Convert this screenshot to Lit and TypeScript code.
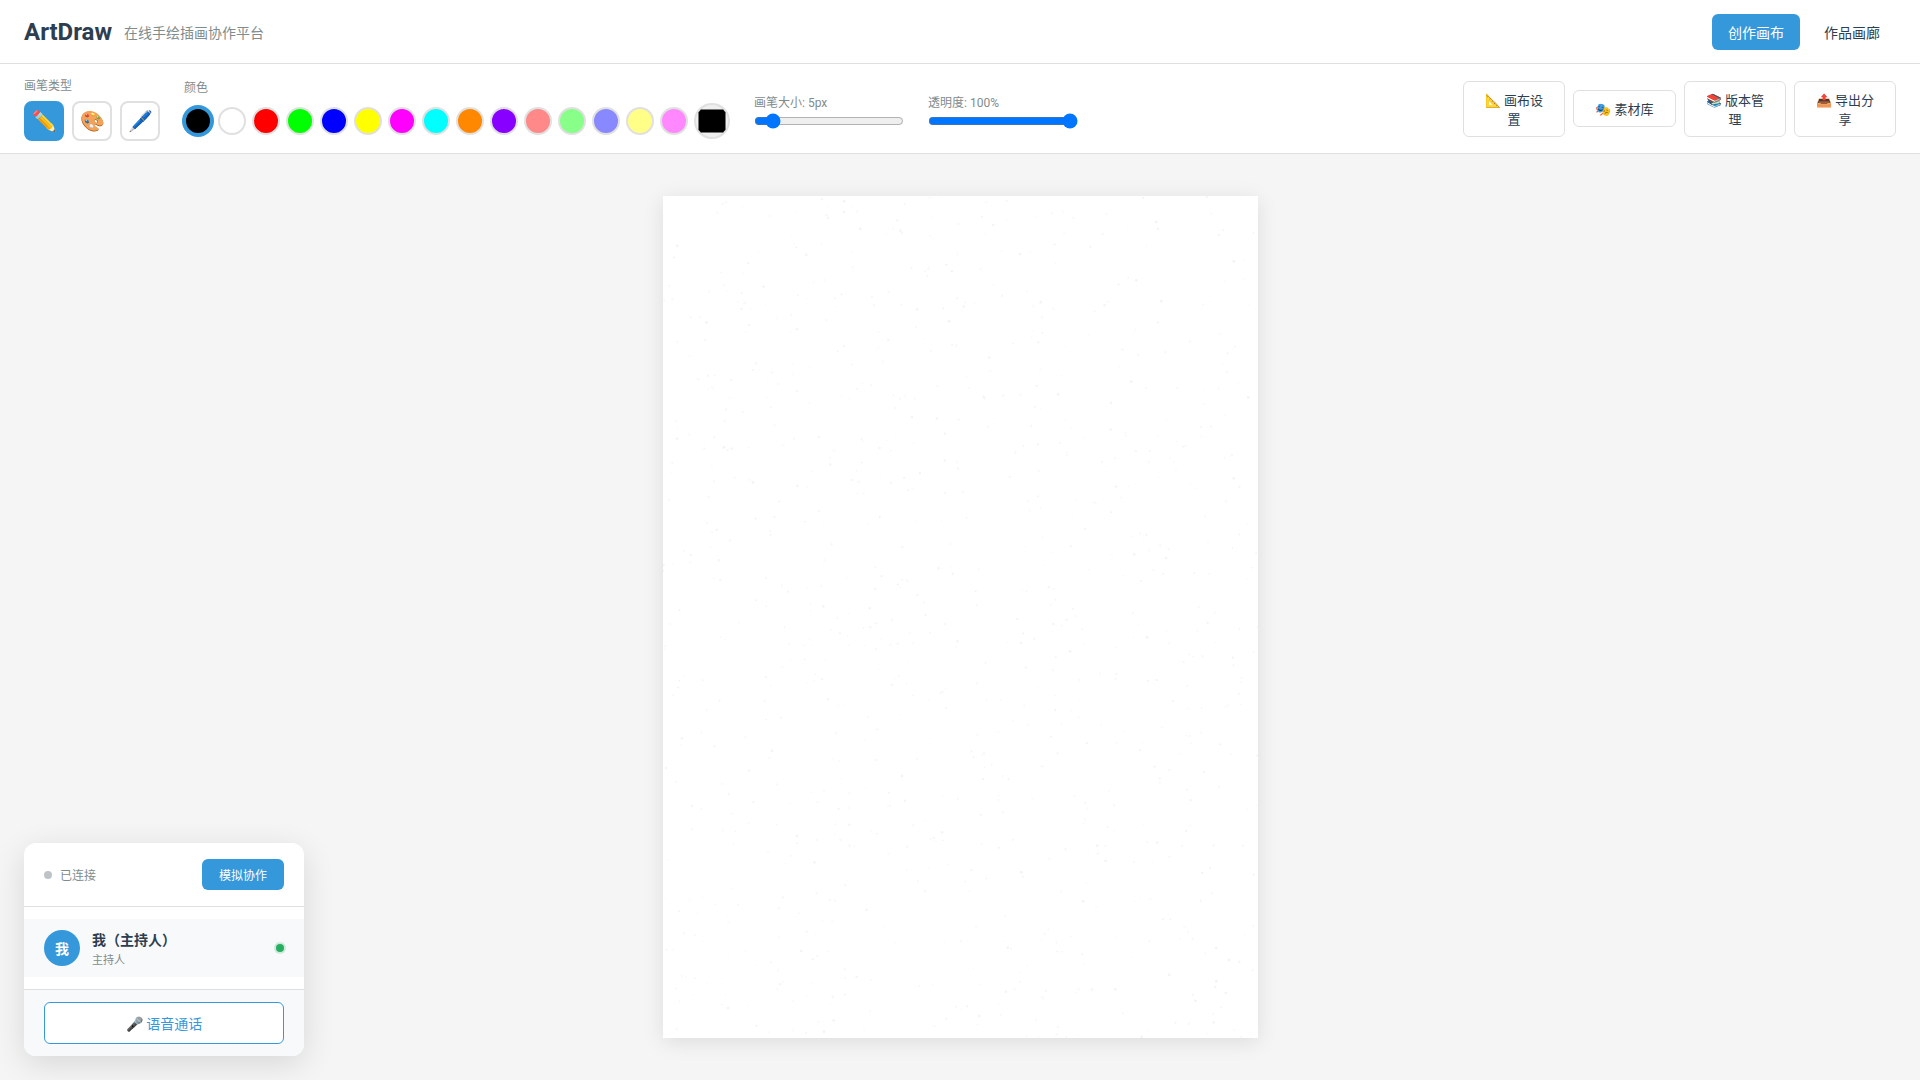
import { LitElement, html, css } from "lit";
import { customElement, state } from "lit/decorators.js";

const COLORS = ["#000000","#ffffff","#ff0000","#00ff00","#0000ff","#ffff00","#ff00ff","#00ffff","#ff8800","#8800ff","#ff8888","#88ff88","#8888ff","#ffff88","#ff88ff"];
const BRUSHES = ["✏️","🎨","🖊️"];
const ACTIONS = [
  { label: "📐 画布设置", w: 102 },
  { label: "🎭 素材库", w: 103 },
  { label: "📚 版本管理", w: 102 },
  { label: "📤 导出分享", w: 102 },
];

@customElement("app-root")
export class AppRoot extends LitElement {
  @state() brush = 0;
  @state() color = "#000000";
  @state() size = 5;
  @state() opacity = 100;

  static styles = css`
    :host {
      display: flex;
      flex-direction: column;
      height: 100vh;
      overflow: hidden;
      font-family: Roboto, "Noto Sans CJK SC", sans-serif;
      background: #f5f5f5;
      color: #2c3e50;
    }
    * { box-sizing: border-box; }
    button { font-family: inherit; cursor: pointer; }
    .header {
      height: 64px;
      flex: none;
      display: flex;
      align-items: center;
      justify-content: space-between;
      padding: 0 24px;
      background: #fff;
      border-bottom: 1px solid #e0e0e0;
    }
    .brand { display: flex; align-items: center; gap: 12px; }
    .logo { font-size: 24px; font-weight: 700; color: #2c3e50; }
    .tagline { font-size: 14px; color: #7f8c8d; }
    .nav { display: flex; gap: 8px; }
    .nav button {
      width: 88px;
      height: 36px;
      border: none;
      border-radius: 6px;
      background: transparent;
      color: #2c3e50;
      font-size: 14px;
    }
    .nav button.on { background: #3498db; color: #fff; }
    .toolbar {
      flex: none;
      height: 90px;
      display: flex;
      align-items: center;
      gap: 24px;
      padding: 0 24px;
      background: #fff;
      border-bottom: 1px solid #e0e0e0;
    }
    .group { display: flex; flex-direction: column; gap: 8px; }
    .label { display: block; font-size: 12px; color: #7f8c8d; }
    .row { display: flex; align-items: center; }
    .brushes { gap: 8px; }
    .brush {
      width: 40px;
      height: 40px;
      padding: 0;
      background: #fff;
      border: 2px solid #e0e0e0;
      border-radius: 8px;
      font-size: 20px;
    }
    .brush.on { background: #3498db; border-color: #3498db; }
    .swatches { gap: 6px; height: 36px; }
    .swatch {
      width: 28px;
      height: 28px;
      padding: 0;
      border: 2px solid #e0e0e0;
      border-radius: 50%;
    }
    .swatch.on { border-color: #3498db; box-shadow: 0 0 0 2px #3498db; }
    .picker {
      width: 36px;
      height: 36px;
      padding: 0;
      background: #efefef;
      border: 2px solid #e0e0e0;
      border-radius: 50%;
    }
    .slider { gap: 3px; width: 150px; margin-top: 4px; }
    .slider input { width: 150px; margin: 0; display: block; }
    .actions { display: flex; align-items: center; gap: 8px; margin-left: auto; }
    .action {
      padding: 8px 16px;
      background: #fff;
      border: 1px solid #e0e0e0;
      border-radius: 6px;
      color: #2c3e50;
      font-size: 13px;
      flex: none;
    }
    .main {
      flex: 1;
      position: relative;
      display: flex;
      align-items: center;
      justify-content: center;
      min-height: 0;
    }
    canvas {
      display: block;
      width: 595px;
      height: 842px;
      background: #fff;
      box-shadow: 0 4px 20px rgba(0, 0, 0, 0.1);
    }
    .panel {
      position: absolute;
      left: 24px;
      bottom: 24px;
      width: 280px;
      background: #fff;
      border-radius: 12px;
      overflow: hidden;
      box-shadow: 0 8px 32px rgba(0, 0, 0, 0.12);
    }
    .panel-head {
      display: flex;
      align-items: center;
      justify-content: space-between;
      padding: 16px 20px;
      border-bottom: 1px solid #e0e0e0;
    }
    .status { display: flex; align-items: center; gap: 8px; font-size: 12px; color: #7f8c8d; }
    .status i { width: 8px; height: 8px; border-radius: 50%; background: #bdc3c7; }
    .sim {
      width: 82px;
      height: 31px;
      border: none;
      border-radius: 6px;
      background: #3498db;
      color: #fff;
      font-size: 12px;
    }
    .users { padding: 12px 0; }
    .user {
      display: flex;
      align-items: center;
      gap: 12px;
      height: 58px;
      padding: 0 20px;
      background: #f8f9fa;
    }
    .avatar {
      width: 36px;
      height: 36px;
      flex: none;
      display: flex;
      align-items: center;
      justify-content: center;
      border-radius: 50%;
      background: #3498db;
      color: #fff;
      font-size: 14px;
      font-weight: 700;
    }
    .info { flex: 1; min-width: 0; }
    .name { font-size: 14px; font-weight: 700; color: #2c3e50; }
    .role { font-size: 11px; margin-top: 2px; color: #7f8c8d; }
    .online {
      width: 8px;
      height: 8px;
      border-radius: 50%;
      background: #27ae60;
      box-shadow: 0 0 0 2px rgba(39, 174, 96, 0.2);
    }
    .panel-foot {
      padding: 12px 20px;
      background: #f8f9fa;
      border-top: 1px solid #e0e0e0;
    }
    .voice {
      display: block;
      width: 100%;
      height: 42px;
      background: #fff;
      border: 1px solid #3498db;
      border-radius: 6px;
      color: #3498db;
      font-size: 14px;
    }
  `;

  firstUpdated() {
    const cv = this.renderRoot.querySelector("canvas") as HTMLCanvasElement;
    const ctx = cv.getContext("2d")!;
    ctx.fillStyle = "#ffffff";
    ctx.fillRect(0, 0, 595, 842);
    let seed = 20240611;
    const rnd = () => {
      seed = (seed * 1664525 + 1013904223) >>> 0;
      return seed / 4294967296;
    };
    for (let i = 0; i < 1000; i++) {
      const g = 243 + Math.floor(rnd() * 8);
      ctx.fillStyle = `rgb(${g},${g},${g})`;
      ctx.beginPath();
      ctx.arc(rnd() * 595, rnd() * 842, 0.6 + rnd() * 0.8, 0, Math.PI * 2);
      ctx.fill();
    }
  }

  render() {
    return html`
      <header class="header">
        <div class="brand">
          <span class="logo">ArtDraw</span>
          <span class="tagline">在线手绘插画协作平台</span>
        </div>
        <nav class="nav">
          <button class="on">创作画布</button>
          <button>作品画廊</button>
        </nav>
      </header>
      <section class="toolbar">
        <div class="group">
          <span class="label">画笔类型</span>
          <div class="row brushes">
            ${BRUSHES.map((b, i) => html`<button class="brush ${i === this.brush ? "on" : ""}" @click=${() => (this.brush = i)}>${b}</button>`)}
          </div>
        </div>
        <div class="group">
          <span class="label">颜色</span>
          <div class="row swatches">
            ${COLORS.map((c) => html`<button class="swatch ${c === this.color ? "on" : ""}" style="background:${c}" @click=${() => (this.color = c)}></button>`)}
            <input class="picker" type="color" .value=${this.color} />
          </div>
        </div>
        <div class="group slider">
          <span class="label">画笔大小: ${this.size}px</span>
          <input type="range" min="1" max="50" .value=${String(this.size)} @input=${(e: Event) => (this.size = +(e.target as HTMLInputElement).value)} />
        </div>
        <div class="group slider">
          <span class="label">透明度: ${this.opacity}%</span>
          <input type="range" min="0" max="100" .value=${String(this.opacity)} @input=${(e: Event) => (this.opacity = +(e.target as HTMLInputElement).value)} />
        </div>
        <div class="actions">
          ${ACTIONS.map((a) => html`<button class="action" style="width:${a.w}px">${a.label}</button>`)}
        </div>
      </section>
      <main class="main">
        <canvas width="595" height="842"></canvas>
        <aside class="panel">
          <div class="panel-head">
            <span class="status"><i></i>已连接</span>
            <button class="sim">模拟协作</button>
          </div>
          <div class="users">
            <div class="user">
              <div class="avatar">我</div>
              <div class="info">
                <div class="name">我（主持人）</div>
                <div class="role">主持人</div>
              </div>
              <span class="online"></span>
            </div>
          </div>
          <div class="panel-foot">
            <button class="voice">🎤 语音通话</button>
          </div>
        </aside>
      </main>
    `;
  }
}
